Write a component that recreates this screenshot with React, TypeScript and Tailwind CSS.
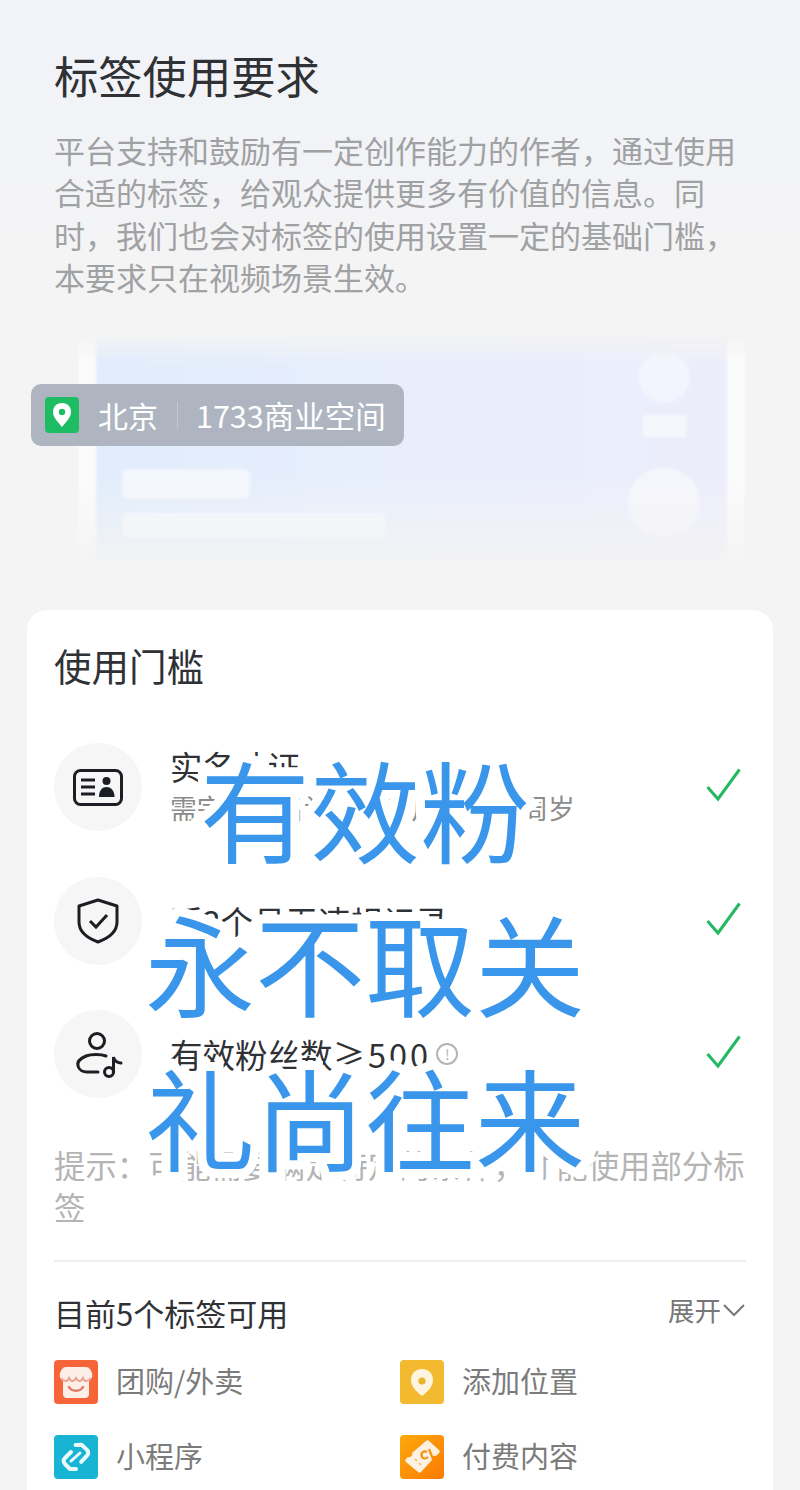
const CheckMark = () => (
  <svg width="35" height="34" viewBox="0 0 35 34" fill="none" className="mb-1 shrink-0">
    <path d="M1.5 19 L12 31 L33.5 1.5" stroke="#25b863" strokeWidth="3" />
  </svg>
);

const IdCardIcon = () => (
  <svg width="50" height="37" viewBox="0 0 50 37" fill="none">
    <rect x="1.5" y="1.5" width="47" height="34" rx="6" stroke="#1b1f24" strokeWidth="3" />
    <path d="M8 11H22M8 18H22M8 25H22" stroke="#1b1f24" strokeWidth="3" />
    <circle cx="33.5" cy="12" r="4" fill="#1b1f24" />
    <path d="M26 28c0-7 3.5-10 7.5-10s8 3 8 10z" fill="#1b1f24" />
  </svg>
);

const ShieldIcon = () => (
  <svg width="42" height="46" viewBox="0 0 42 46" fill="none">
    <path d="M21 2 L40 8 V24 C40 34 32 40 21 44 C10 40 2 34 2 24 V8 Z" stroke="#1b1f24" strokeWidth="3" strokeLinejoin="round" />
    <path d="M13 23 L19 29 L30 17" stroke="#1b1f24" strokeWidth="3" />
  </svg>
);

const FanIcon = () => (
  <svg width="50" height="50" viewBox="0 0 50 50" fill="none">
    <circle cx="24" cy="12" r="7.5" stroke="#1b1f24" strokeWidth="3" />
    <path d="M33 27C28 25 18 25 13 27C6 30 4 34 5 37C6 41 10 43 14 43H25" stroke="#1b1f24" strokeWidth="3" strokeLinecap="round" />
    <circle cx="36" cy="43" r="4.5" stroke="#1b1f24" strokeWidth="3" />
    <path d="M40.5 43V28C41 32 45 34 48 34" stroke="#1b1f24" strokeWidth="3" strokeLinecap="round" />
  </svg>
);

const ShopIcon = () => (
  <svg width="44" height="44" viewBox="0 0 44 44">
    <rect width="44" height="44" rx="4" fill="#f6653a" />
    <path d="M12 7h20c3 0 5 3 6 6 1 4-1 7-3 8v13c0 3-2 4-4 4H13c-2 0-4-1-4-4V21c-2-1-4-4-3-8 1-3 3-6 6-6z" fill="#fdeee8" />
    <path d="M7 18c3 4 7 4 8 0c2 4 5 4 7 0c2 4 5 4 7 0c1 4 5 4 8 0" stroke="#e9a08c" strokeWidth="1.8" fill="none" />
    <path d="M15 27c3 5 11 5 14 0" stroke="#e27561" strokeWidth="2.4" fill="none" strokeLinecap="round" />
  </svg>
);

const MiniProgramIcon = () => (
  <svg width="44" height="44" viewBox="0 0 44 44">
    <rect width="44" height="44" rx="4" fill="#17b4d3" />
    <path d="M22 10 L28 10 L33 15 a4 4 0 0 1 0 6 L27 27" stroke="#eafafd" strokeWidth="4" fill="none" strokeLinecap="round" strokeLinejoin="round" transform="rotate(-2 22 22)" />
    <path d="M22 34 L16 34 L11 29 a4 4 0 0 1 0 -6 L17 17" stroke="#eafafd" strokeWidth="4" fill="none" strokeLinecap="round" strokeLinejoin="round" />
    <path d="M17 26 L26 18" stroke="#eafafd" strokeWidth="3" fill="none" strokeLinecap="round" />
  </svg>
);

const LocationIcon = () => (
  <svg width="44" height="44" viewBox="0 0 44 44">
    <rect width="44" height="44" rx="4" fill="#f3b92f" />
    <path d="M22 9c7 0 11 5 11 11 0 7-6 12-11 16-5-4-11-9-11-16 0-6 4-11 11-11z" fill="#fdf5df" />
    <circle cx="22" cy="21" r="3.6" fill="#e9b32e" />
  </svg>
);

const TicketIcon = () => (
  <svg width="44" height="44" viewBox="0 0 44 44">
    <defs>
      <linearGradient id="ticket" x1="0" y1="0" x2="1" y2="1">
        <stop offset="0" stopColor="#fda90a" />
        <stop offset="1" stopColor="#fb7a05" />
      </linearGradient>
    </defs>
    <rect width="44" height="44" rx="4" fill="url(#ticket)" />
    <path d="M26 6 C27 5 28 5 29 6 L39 15 C40 16 40 17 39 18 L36 21 C33 20 31 23 32 25 L21 37 C20 38 19 38 18 37 L6 27 C5 26 5 25 6 24 L8 22 C11 23 13 20 12 18 Z" fill="#fdf1e2" />
    <path d="M27 17 C24 15 20 18 22 22 C23 24 26 24 28 22 M29 14 L33 24" stroke="#f98f0c" strokeWidth="2.2" fill="none" />
    <path d="M15 24l2 2M19 28l2 2" stroke="#f2b469" strokeWidth="1.6" />
  </svg>
);

const PinBadge = () => (
  <svg width="34" height="36" viewBox="0 0 34 36" className="shrink-0">
    <rect width="34" height="36" rx="4" fill="#1fbd63" />
    <path d="M17 6c6 0 9 4 9 9 0 6-6 11-9 15-3-4-9-9-9-15 0-5 3-9 9-9z" fill="#fff" />
    <circle cx="17" cy="15" r="3.2" fill="#1fbd63" />
  </svg>
);

const rows = [
  { icon: <IdCardIcon />, title: "实名认证", sub: "需完成实名认证，用户年满18周岁" },
  { icon: <ShieldIcon />, title: "近3个月无违规记录" },
  { icon: <FanIcon />, title: "有效粉丝数", tail: "≥500", info: true },
];

const tags = [
  { icon: <ShopIcon />, name: "团购/外卖" },
  { icon: <LocationIcon />, name: "添加位置" },
  { icon: <MiniProgramIcon />, name: "小程序" },
  { icon: <TicketIcon />, name: "付费内容" },
];

export default function App() {
  return (
    <div className="relative w-[800px] h-[1490px] overflow-hidden bg-[#f4f4f4] font-['Noto_Sans_CJK_SC','Noto_Sans',sans-serif]">
      <div className="bg-gradient-to-b from-[#f1f3f9] to-[#f4f4f4] px-[54px] pt-[45px] h-[300px]">
        <h1 className="text-[44.3px] leading-[60px] font-normal text-[#2f3135]">标签使用要求</h1>
        <p className="mt-[24px] text-[31px] leading-[42.4px] text-[#a0a1a3]">
          平台支持和鼓励有一定创作能力的作者，通过使用合适的标签，给观众提供更多有价值的信息。同时，我们也会对标签的使用设置一定的基础门槛，本要求只在视频场景生效。
        </p>
      </div>

      {/* blurred preview */}
      <div className="relative mt-[35px] ml-[78px] w-[667px] h-[235px] bg-[#fbfbfc] px-[18px] blur-[1.5px] [mask-image:linear-gradient(to_bottom,transparent,black_12%,black_60%,transparent)]">
        <div className="flex h-full justify-between bg-gradient-to-r from-[#e0ecfc] via-[#e8eefc] to-[#ecedfb] pl-[26px] pr-[27px] pt-[17px] pb-[32px]">
          <div className="flex flex-col justify-end gap-[14px]">
            <div className="w-[128px] h-[30px] rounded-md bg-[#f3f7fe]" />
            <div className="w-[264px] h-[25px] rounded-md bg-[#f3f7fe]" />
          </div>
          <div className="flex flex-col items-center gap-[12px]">
            <div className="w-[52px] h-[51px] rounded-full bg-[#f3f4fd]" />
            <div className="w-[43px] h-[22px] bg-[#f6f7fd]" />
            <div className="mt-[19px] w-[72px] h-[69px] rounded-full bg-[#f5f6fc]" />
          </div>
        </div>
      </div>

      <div className="absolute left-[31px] top-[384px] w-[373px] h-[62px] rounded-[10px] bg-[#aeb5c1] flex items-center pl-[14px] text-white text-[30px] leading-none">
        <PinBadge />
        <span className="ml-[19px]">北京</span>
        <span className="ml-[19px] w-px h-[26px] bg-[#c4cad4]" />
        <span className="ml-[18px] text-[30.5px]">1733商业空间</span>
      </div>

      <div className="mt-[40px] mx-[27px] rounded-t-[20px] bg-white px-[27px] pt-[30px] pb-[40px]">
        <h2 className="text-[37.5px] leading-[50px] font-normal text-[#2f3135]">使用门槛</h2>

        <div className="mt-[53px] flex flex-col gap-[45.5px]">
          {rows.map((row) => (
            <div key={row.title} className="flex items-center h-[88px]">
              <div className="w-[88px] h-[88px] rounded-full bg-[#f6f6f7] flex items-center justify-center shrink-0">
                {row.icon}
              </div>
              <div className="ml-[28px] flex-1">
                <div className="flex items-center text-[32.5px] leading-[42px] text-[#2f3135]">
                  {row.title}
                  {row.tail && <span className="tracking-[3px]">{row.tail}</span>}
                  {row.info && (
                    <span className="ml-[5px] w-[22px] h-[22px] rounded-full border-2 border-[#b5b5b5] text-[#b5b5b5] text-[14px] leading-[18px] text-center">
                      !
                    </span>
                  )}
                </div>
                {row.sub && <div className="text-[26.8px] leading-[42px] text-[#8c8c8c]">{row.sub}</div>}
              </div>
              <div className="mr-[5px]">
                <CheckMark />
              </div>
            </div>
          ))}
        </div>

        <p className="mt-[46px] text-[31.4px] leading-[42px] text-[#b4b4b4]">
          提示：可能需要满足特定的条件，才能使用部分标签
        </p>

        <div className="mt-[32px] h-[2px] bg-[#eeeeee]" />

        <div className="mt-[31px] flex items-center justify-between h-[40px]">
          <span className="text-[31px] leading-[40px] text-[#2f3135]">目前5个标签可用</span>
          <span className="flex items-center text-[26.5px] leading-[40px] text-[#777777] -mt-[6px]">
            展开
            <svg width="24" height="14" viewBox="0 0 24 14" fill="none" className="ml-[1px]">
              <path d="M2 2 L12 12 L22 2" stroke="#777777" strokeWidth="2" />
            </svg>
          </span>
        </div>

        <div className="mt-[27px] grid grid-cols-[346px_1fr] gap-y-[31px]">
          {tags.map((tag) => (
            <div key={tag.name} className="flex items-center h-[44px]">
              {tag.icon}
              <span className="ml-[18px] text-[29px] text-[#7b7b7b] -mt-[2px]">{tag.name}</span>
            </div>
          ))}
        </div>
      </div>

      {/* watermark caption */}
      <div className="absolute left-0 top-[730px] w-[730px] flex flex-col items-center text-[110px] leading-[154px] text-[#3a96ea] [-webkit-text-stroke:18px_white] [paint-order:stroke_fill]">
        <div>有效粉</div>
        <div>永不取关</div>
        <div>礼尚往来</div>
      </div>
    </div>
  );
}
